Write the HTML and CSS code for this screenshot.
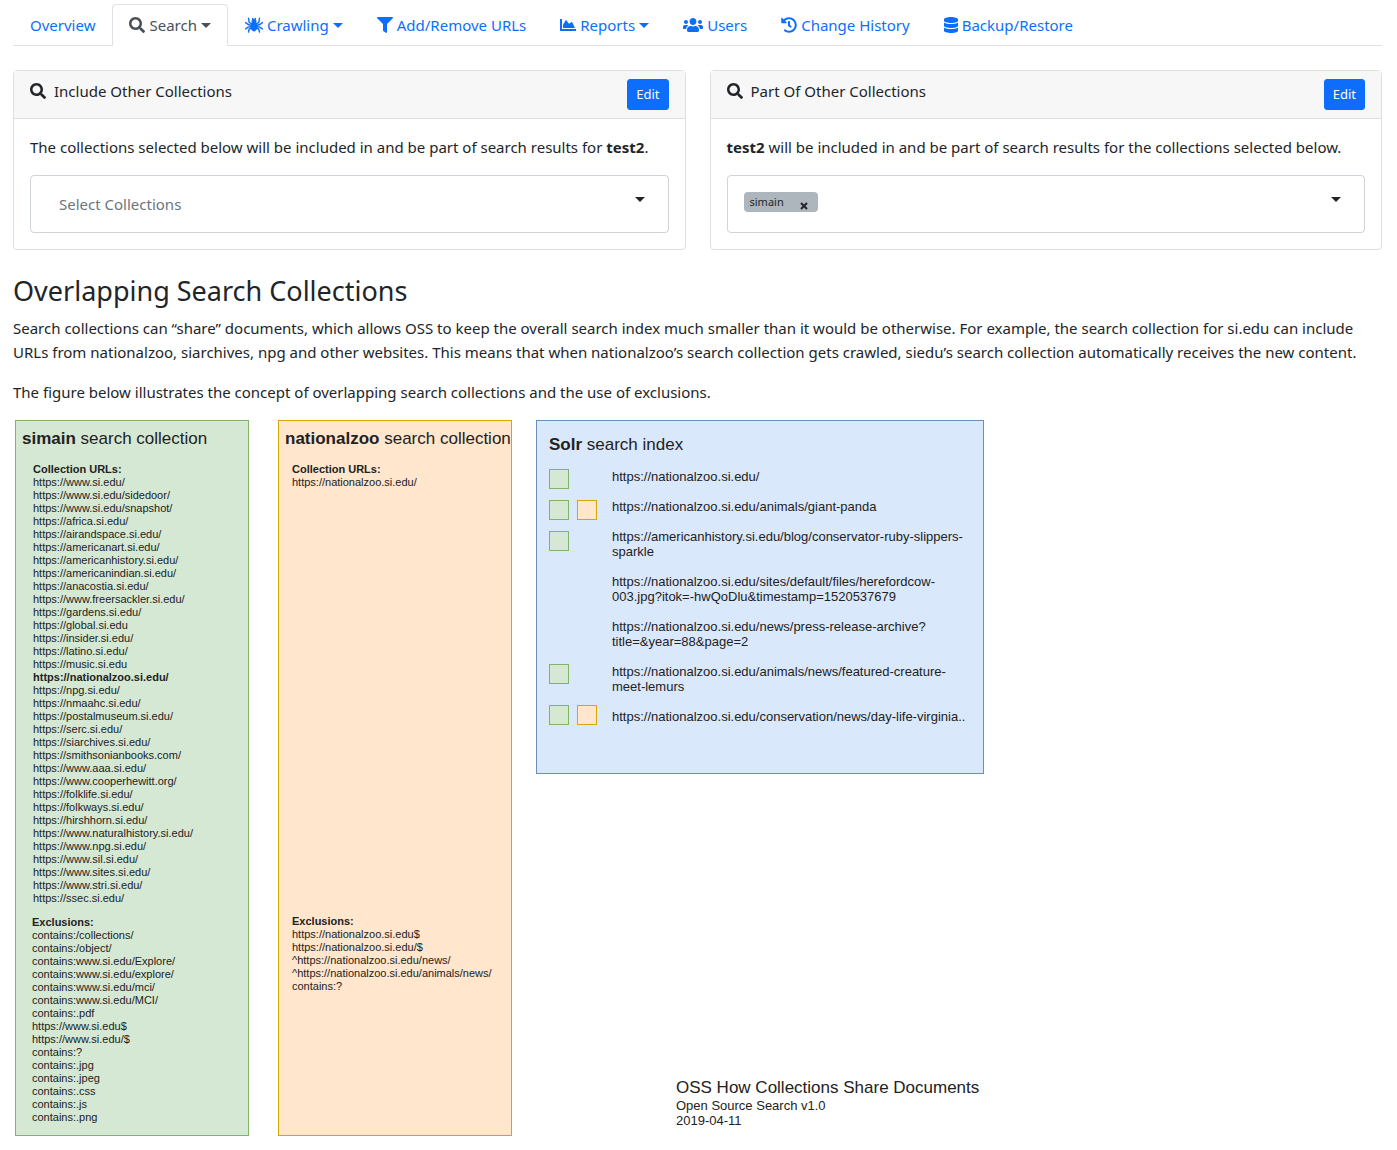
FILE: index.html
```html
<!DOCTYPE html>
<html lang="en">
<head>
<meta charset="utf-8">
<meta name="viewport" content="width=device-width, initial-scale=1">
<title>Overlapping Search Collections</title>
<link rel="stylesheet" href="styles.css">
</head>
<body>
<svg class="sprite" aria-hidden="true">
  <symbol id="i-search" viewBox="0 0 512 512"><path d="M505 442.7L405.3 343c-4.500-4.500-10.600-7-17-7H372c27.600-35.300 44-79.700 44-128C416 93.100 322.900 0 208 0S0 93.100 0 208s93.100 208 208 208c48.300 0 92.700-16.400 128-44v16.300c0 6.400 2.500 12.500 7 17l99.700 99.700c9.400 9.400 24.600 9.400 33.900 0l28.300-28.300c9.400-9.400 9.400-24.600.1-34zM208 336c-70.700 0-128-57.200-128-128 0-70.700 57.200-128 128-128 70.700 0 128 57.200 128 128 0 70.700-57.200 128-128 128z"/></symbol>
  <symbol id="i-spider" viewBox="0 0 576 512"><path d="M288 160c-64 0-112 60-112 144 0 88 52 160 112 160s112-72 112-160c0-84-48-144-112-144z"/><circle cx="288" cy="140" r="80"/><path d="M250 110V50M326 110V50M230 220L136 180 112 40M346 220l94-40 24-140M210 272L100 240 20 180M366 272l110-32 80-60M210 300l-110 24-80 56M366 300l110 24 80 56M226 340l-90 44-24 96M350 340l90 44 24 96" fill="none" stroke="currentColor" stroke-width="46" stroke-linecap="round" stroke-linejoin="round"/></symbol>
  <symbol id="i-filter" viewBox="0 0 512 512"><path d="M487.976 0H24.028C2.710 0-8.047 25.866 7.058 40.971L192 225.941V432c0 7.831 3.821 15.170 10.237 19.662l80 55.980C298.020 518.690 320 507.493 320 487.980V225.941l184.947-184.970C520.021 25.896 509.338 0 487.976 0z"/></symbol>
  <symbol id="i-chart" viewBox="0 0 512 512"><path d="M500 384c6.600 0 12 5.400 12 12v40c0 6.600-5.400 12-12 12H12c-6.600 0-12-5.400-12-12V76c0-6.600 5.400-12 12-12h40c6.600 0 12 5.400 12 12v308h436zM372.700 159.500L288 216l-85.300-113.700c-5.100-6.800-15.500-6.300-19.900 1L96 248v104h384l-89.900-187.800c-3.200-6.500-11.400-8.700-17.400-4.700z"/></symbol>
  <symbol id="i-users" viewBox="0 0 640 512"><path d="M96 224c35.300 0 64-28.700 64-64s-28.700-64-64-64-64 28.700-64 64 28.700 64 64 64zm448 0c35.300 0 64-28.700 64-64s-28.700-64-64-64-64 28.700-64 64 28.700 64 64 64zm32 32h-64c-17.600 0-33.500 7.100-45.100 18.600 40.300 22.100 68.900 62 75.100 109.400h66c17.700 0 32-14.300 32-32v-32c0-35.300-28.700-64-64-64zm-256 0c61.900 0 112-50.100 112-112S381.900 32 320 32 208 82.100 208 144s50.100 112 112 112zm76.800 32h-8.300c-20.800 10-43.900 16-68.500 16s-47.600-6-68.500-16h-8.300C179.600 288 128 339.600 128 403.200V432c0 26.500 21.500 48 48 48h288c26.500 0 48-21.500 48-48v-28.800c0-63.600-51.600-115.200-115.200-115.200zm-223.700-13.400C161.500 263.100 145.600 256 128 256H64c-35.300 0-64 28.700-64 64v32c0 17.700 14.300 32 32 32h65.900c6.300-47.400 34.900-87.300 75.200-109.400z"/></symbol>
  <symbol id="i-history" viewBox="0 0 512 512"><path d="M504 255.531c.253 136.640-111.180 248.372-247.820 248.468-59.015.042-113.223-20.530-155.822-54.911-11.077-8.940-11.905-25.541-1.839-35.607l11.267-11.267c8.609-8.609 22.353-9.551 31.891-1.984C173.062 425.135 212.781 440 256 440c101.705 0 184-82.311 184-184 0-101.705-82.311-184-184-184-48.814 0-93.149 18.969-126.068 49.932l50.754 50.754c10.080 10.080 2.941 27.314-11.313 27.314H24c-8.837 0-16-7.163-16-16V38.627c0-14.254 17.234-21.393 27.314-11.314l49.372 49.372C129.209 34.136 189.552 8 256 8c136.810 0 247.747 110.780 248 247.531zm-180.912 78.784l9.823-12.630c8.138-10.463 6.253-25.542-4.210-33.679L288 256.349V152c0-13.255-10.745-24-24-24h-16c-13.255 0-24 10.745-24 24v135.651l65.409 50.874c10.463 8.137 25.541 6.253 33.679-4.210z"/></symbol>
  <symbol id="i-database" viewBox="0 0 448 512"><path d="M448 73.143v45.714C448 159.143 347.667 192 224 192S0 159.143 0 118.857V73.143C0 32.857 100.333 0 224 0s224 32.857 224 73.143zM448 176v102.857C448 319.143 347.667 352 224 352S0 319.143 0 278.857V176c48.125 33.143 136.208 48.572 224 48.572S399.874 209.143 448 176zm0 160v102.857C448 479.143 347.667 512 224 512S0 479.143 0 438.857V336c48.125 33.143 136.208 48.572 224 48.572S399.874 369.143 448 336z"/></symbol>
</svg>

<nav class="tabs" aria-label="Collection">
  <a class="tab" href="#overview">Overview</a>
  <a class="tab tab-active" href="#search" aria-current="page"><svg class="icon"><use href="#i-search"/></svg>Search<span class="caret"></span></a>
  <a class="tab" href="#crawling"><svg class="icon icon-18"><use href="#i-spider"/></svg>Crawling<span class="caret"></span></a>
  <a class="tab" href="#urls"><svg class="icon"><use href="#i-filter"/></svg>Add/Remove URLs</a>
  <a class="tab" href="#reports"><svg class="icon"><use href="#i-chart"/></svg>Reports<span class="caret"></span></a>
  <a class="tab" href="#users"><svg class="icon icon-20"><use href="#i-users"/></svg>Users</a>
  <a class="tab" href="#history"><svg class="icon"><use href="#i-history"/></svg>Change History</a>
  <a class="tab" href="#backup"><svg class="icon icon-14"><use href="#i-database"/></svg>Backup/Restore</a>
</nav>

<main>
  <div class="cards">
    <section class="card">
      <header class="card-header">
        <span class="card-title"><svg class="icon"><use href="#i-search"/></svg>Include Other Collections</span>
        <button class="btn" type="button">Edit</button>
      </header>
      <div class="card-body">
        <p>The collections selected below will be included in and be part of search results for <strong>test2</strong>.</p>
        <div class="picker">
          <input class="picker-input" type="text" placeholder="Select Collections" aria-label="Included collections">
          <button class="picker-toggle" type="button" aria-label="Show collections"><span class="caret"></span></button>
        </div>
      </div>
    </section>
    <section class="card">
      <header class="card-header">
        <span class="card-title"><svg class="icon"><use href="#i-search"/></svg>Part Of Other Collections</span>
        <button class="btn" type="button">Edit</button>
      </header>
      <div class="card-body">
        <p><strong>test2</strong> will be included in and be part of search results for the collections selected below.</p>
        <div class="picker">
          <span class="tag">simain<button class="tag-remove" type="button" aria-label="Remove simain"><svg viewBox="0 0 8 8"><path d="M1 1l6 6M7 1L1 7"/></svg></button></span>
          <input class="picker-input" type="text" aria-label="Parent collections">
          <button class="picker-toggle" type="button" aria-label="Show collections"><span class="caret"></span></button>
        </div>
      </div>
    </section>
  </div>

  <h1>Overlapping Search Collections</h1>
  <p>Search collections can “share” documents, which allows OSS to keep the overall search index much smaller than it would be otherwise. For example, the search collection for si.edu can include URLs from nationalzoo, siarchives, npg and other websites. This means that when nationalzoo’s search collection gets crawled, siedu’s search collection automatically receives the new content.</p>
  <p>The figure below illustrates the concept of overlapping search collections and the use of exclusions.</p>

  <figure class="diagram">
    <section class="source green">
      <h2><b>simain</b> search collection</h2>
      <div class="urls">
        <h3>Collection URLs:</h3>
        <ul>
          <li>https://www.si.edu/</li>
          <li>https://www.si.edu/sidedoor/</li>
          <li>https://www.si.edu/snapshot/</li>
          <li>https://africa.si.edu/</li>
          <li>https://airandspace.si.edu/</li>
          <li>https://americanart.si.edu/</li>
          <li>https://americanhistory.si.edu/</li>
          <li>https://americanindian.si.edu/</li>
          <li>https://anacostia.si.edu/</li>
          <li>https://www.freersackler.si.edu/</li>
          <li>https://gardens.si.edu/</li>
          <li>https://global.si.edu</li>
          <li>https://insider.si.edu/</li>
          <li>https://latino.si.edu/</li>
          <li>https://music.si.edu</li>
          <li><b>https://nationalzoo.si.edu/</b></li>
          <li>https://npg.si.edu/</li>
          <li>https://nmaahc.si.edu/</li>
          <li>https://postalmuseum.si.edu/</li>
          <li>https://serc.si.edu/</li>
          <li>https://siarchives.si.edu/</li>
          <li>https://smithsonianbooks.com/</li>
          <li>https://www.aaa.si.edu/</li>
          <li>https://www.cooperhewitt.org/</li>
          <li>https://folklife.si.edu/</li>
          <li>https://folkways.si.edu/</li>
          <li>https://hirshhorn.si.edu/</li>
          <li>https://www.naturalhistory.si.edu/</li>
          <li>https://www.npg.si.edu/</li>
          <li>https://www.sil.si.edu/</li>
          <li>https://www.sites.si.edu/</li>
          <li>https://www.stri.si.edu/</li>
          <li>https://ssec.si.edu/</li>
        </ul>
      </div>
      <div class="exclusions">
        <h3>Exclusions:</h3>
        <ul>
          <li>contains:/collections/</li>
          <li>contains:/object/</li>
          <li>contains:www.si.edu/Explore/</li>
          <li>contains:www.si.edu/explore/</li>
          <li>contains:www.si.edu/mci/</li>
          <li>contains:www.si.edu/MCI/</li>
          <li>contains:.pdf</li>
          <li>https://www.si.edu$</li>
          <li>https://www.si.edu/$</li>
          <li>contains:?</li>
          <li>contains:.jpg</li>
          <li>contains:.jpeg</li>
          <li>contains:.css</li>
          <li>contains:.js</li>
          <li>contains:.png</li>
        </ul>
      </div>
    </section>

    <section class="source orange">
      <h2><b>nationalzoo</b> search collection</h2>
      <div class="urls">
        <h3>Collection URLs:</h3>
        <ul>
          <li>https://nationalzoo.si.edu/</li>
        </ul>
      </div>
      <div class="exclusions">
        <h3>Exclusions:</h3>
        <ul>
          <li>https://nationalzoo.si.edu$</li>
          <li>https://nationalzoo.si.edu/$</li>
          <li>^https://nationalzoo.si.edu/news/</li>
          <li>^https://nationalzoo.si.edu/animals/news/</li>
          <li>contains:?</li>
        </ul>
      </div>
    </section>

    <div class="result">
      <section class="index">
        <h2><b>Solr</b> search index</h2>
        <div class="index-body">
          <div class="marks">
            <div class="marks-top">
              <div class="mark-row"><i class="green"></i></div>
              <div class="mark-row"><i class="green"></i><i class="orange"></i></div>
              <div class="mark-row"><i class="green"></i></div>
            </div>
            <div class="marks-bottom">
              <div class="mark-row"><i class="green"></i></div>
              <div class="mark-row"><i class="green"></i><i class="orange"></i></div>
            </div>
          </div>
          <ul class="documents">
            <li>https://nationalzoo.si.edu/</li>
            <li>https://nationalzoo.si.edu/animals/giant-panda</li>
            <li>https://americanhistory.si.edu/blog/conservator-ruby-slippers-<br>sparkle</li>
            <li>https://nationalzoo.si.edu/sites/default/files/herefordcow-<br>003.jpg?itok=-hwQoDlu&amp;timestamp=1520537679</li>
            <li>https://nationalzoo.si.edu/news/press-release-archive?<br>title=&amp;year=88&amp;page=2</li>
            <li>https://nationalzoo.si.edu/animals/news/featured-creature-<br>meet-lemurs</li>
            <li>https://nationalzoo.si.edu/conservation/news/day-life-virginia..</li>
          </ul>
        </div>
      </section>
      <figcaption>
        <div class="caption-title">OSS How Collections Share Documents</div>
        <div>Open Source Search v1.0</div>
        <div>2019-04-11</div>
      </figcaption>
    </div>
  </figure>
</main>
</body>
</html>
```
FILE: styles.css
```css
* { box-sizing: border-box; }

body {
  margin: 0;
  padding: 4px 15px 12px 13px;
  font-family: "Noto Sans", "Liberation Sans", sans-serif;
  font-size: 15px;
  line-height: 24px;
  color: #212529;
  background: #fff;
}

p { margin: 0 0 16px; }
ul { margin: 0; padding: 0; list-style: none; }
button, input { font: inherit; color: inherit; }

.sprite { display: none; }
.icon { flex: none; width: 16px; height: 16px; fill: currentColor; }
.icon-14 { width: 14px; }
.icon-18 { width: 18px; }
.icon-20 { width: 20px; }
.caret {
  border-top: 5px solid;
  border-left: 5px solid transparent;
  border-right: 5px solid transparent;
}

/* Tabs */
.tabs {
  display: flex;
  flex-wrap: wrap;
  margin-bottom: 24px;
  border-bottom: 1px solid #dee2e6;
}
.tab {
  display: flex;
  align-items: center;
  gap: 4px;
  margin-bottom: -1px;
  padding: 8px 16px;
  border: 1px solid transparent;
  border-radius: 4px 4px 0 0;
  color: #0d6efd;
  text-decoration: none;
}
.tab-active {
  color: #495057;
  background: #fff;
  border-color: #dee2e6 #dee2e6 #fff;
}

/* Cards */
.cards {
  display: grid;
  grid-template-columns: 1fr 1fr;
  gap: 24px;
  margin-bottom: 24px;
}
.card { border: 1px solid #dfdfdf; border-radius: 4px; }
.card-header {
  display: flex;
  justify-content: space-between;
  align-items: flex-start;
  padding: 8px 16px;
  background: #f7f7f7;
  border-bottom: 1px solid #dfdfdf;
}
.card-title { display: flex; align-items: center; gap: 8px; }
.btn {
  padding: 4px 8px;
  border: 1px solid #0d6efd;
  border-radius: 3px;
  background: #0d6efd;
  color: #fff;
  font-size: 13px;
  line-height: 21px;
}
.card-body { padding: 16px; }

.picker {
  display: flex;
  align-items: flex-start;
  padding: 16px;
  border: 1px solid #ced4da;
  border-radius: 4px;
}
.picker-input {
  flex: 1;
  min-width: 0;
  height: 24px;
  padding: 0 12px;
  border: 0;
  outline: 0;
  background: none;
}
.picker-input::placeholder { color: #6c757d; opacity: 1; }
.picker-toggle {
  display: flex;
  padding: 5px 7px;
  border: 0;
  background: none;
}
.tag {
  display: flex;
  align-items: center;
  gap: 16px;
  height: 20px;
  padding: 0 10px 0 6px;
  border-radius: 4px;
  background: #adb5bd;
  font-size: 11px;
}
.tag-remove {
  display: flex;
  align-self: flex-end;
  padding: 0 0 2px;
  border: 0;
  background: none;
}
.tag-remove svg {
  width: 8px;
  height: 8px;
  fill: none;
  stroke: currentColor;
  stroke-width: 2;
}

h1 {
  margin: 0 0 8px;
  font-size: 27px;
  font-weight: 400;
  line-height: 34px;
}

/* Diagram */
.diagram {
  display: flex;
  align-items: stretch;
  margin: 0 2px;
  font-family: "Liberation Sans", Arial, sans-serif;
  color: #222;
}
.diagram h2 { margin: 0; font-size: 17px; font-weight: 400; line-height: 20px; }
.diagram h3 { margin: 0; font-size: 11px; font-weight: 700; line-height: 13px; }
.green { background: #d5e8d4; border: 1px solid #82b366; }
.orange { background: #ffe6cc; border: 1px solid #d6a800; }
.source {
  flex: none;
  display: flex;
  flex-direction: column;
  width: 234px;
  margin-right: 29px;
  padding: 8px 0 11px 6px;
  font-size: 11px;
  line-height: 13px;
  white-space: nowrap;
}
.source.orange { margin-right: 24px; padding-bottom: 142px; }
.urls { margin-left: 11px; padding-top: 14px; }
.exclusions { margin-top: auto; margin-left: 10px; padding-top: 11px; }
.source.orange .urls, .source.orange .exclusions { margin-left: 7px; }

.result { display: flex; flex-direction: column; width: 448px; }
.index {
  padding: 14px 12px 48px;
  background: #dae8fc;
  border: 1px solid #6c8ebf;
}
.index-body { display: flex; padding-top: 14px; }
.marks { flex: none; width: 63px; }
.marks-top, .marks-bottom { display: flex; flex-direction: column; gap: 11px; }
.marks-bottom { gap: 21px; margin-top: 113px; }
.mark-row { display: flex; gap: 8px; }
.mark-row i { width: 20px; height: 20px; }
.documents {
  display: flex;
  flex-direction: column;
  gap: 15px;
  font-size: 13px;
  line-height: 15px;
  white-space: nowrap;
}
figcaption {
  margin-top: auto;
  padding: 0 0 8px 140px;
  font-size: 13px;
  line-height: 15px;
}
.caption-title { font-size: 17px; line-height: 20px; }
```
